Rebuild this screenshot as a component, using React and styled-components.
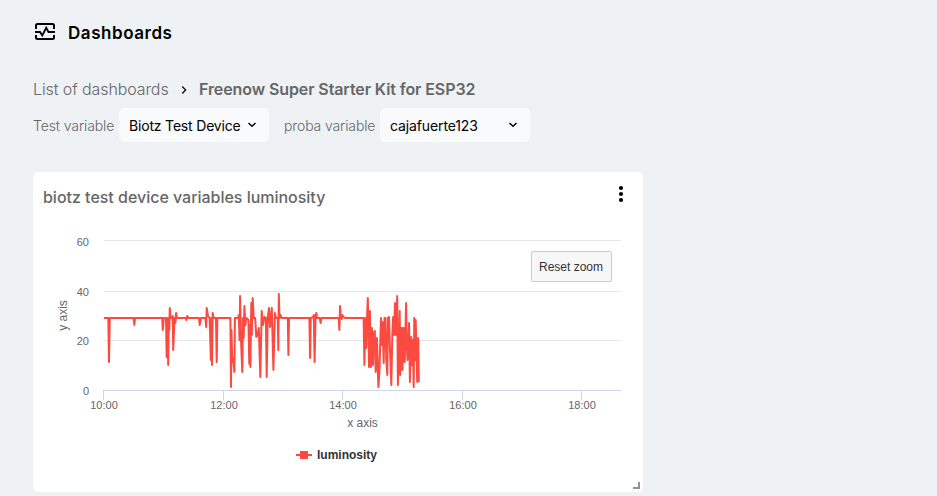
import React from 'react';
import styled, { createGlobalStyle } from 'styled-components';

const GlobalStyle = createGlobalStyle`
  *, *::before, *::after { box-sizing: border-box; }
  body {
    margin: 0;
    background: #eef2f5;
    font-family: Inter, sans-serif;
    color: #000;
    overflow: hidden;
  }
`;

const Page = styled.main`
  display: flex;
  flex-direction: column;
  height: 496px;
  padding: 20px 33px 0;
`;

const PageHeader = styled.header`
  display: flex;
  align-items: center;
  gap: 11px;
  height: 24px;
`;

const PageTitle = styled.h1`
  margin: 2px 0 0;
  font-size: 17px;
  font-weight: 600;
  line-height: 24px;
  letter-spacing: 0.55px;
  white-space: nowrap;
`;

const Breadcrumbs = styled.nav`
  display: flex;
  align-items: center;
  height: 24px;
  margin-top: 33px;
  font-size: 16px;
  line-height: 24px;
  color: #666;
  white-space: nowrap;
`;

const Crumb = styled.span`
  width: ${({ $width }) => $width}px;
  font-weight: ${({ $current }) => ($current ? 600 : 300)};
  letter-spacing: ${({ $spacing }) => $spacing}px;
`;

const CrumbArrow = styled.svg`
  margin: 1px 11px 0 11px;
`;

const Filters = styled.div`
  display: flex;
  align-items: center;
  height: 34px;
  margin-top: 7px;
`;

const FilterLabel = styled.label`
  width: ${({ $width }) => $width}px;
  font-size: 14px;
  font-weight: 300;
  letter-spacing: ${({ $spacing }) => $spacing}px;
  color: #666;
  white-space: nowrap;
`;

const Select = styled.button`
  display: flex;
  align-items: center;
  justify-content: space-between;
  width: 150px;
  height: 34px;
  margin-right: 15px;
  padding: 0 12px 0 10px;
  border: 0;
  border-radius: 5px;
  background: #f9fafc;
  color: #000;
  font: 400 14px Inter, sans-serif;
  letter-spacing: ${({ $spacing }) => $spacing}px;
  white-space: nowrap;
`;

const Card = styled.section`
  position: relative;
  width: 610px;
  height: 320px;
  margin-top: 30px;
  border-radius: 5px;
  background: #fff;
`;

const CardHeader = styled.div`
  display: flex;
  align-items: center;
  justify-content: space-between;
  height: 50px;
  padding: 0 17px 0 10px;
`;

const CardTitle = styled.h2`
  margin: 0;
  font-size: 16px;
  font-weight: 500;
  letter-spacing: -0.02px;
  color: #666;
  white-space: nowrap;
`;

const MenuIcon = styled.svg`
  margin-top: -6px;
`;

const Chart = styled.svg`
  display: block;
  font-family: "Liberation Sans", Arial, sans-serif;
`;

const ResetButton = styled.button`
  position: absolute;
  top: 79px;
  left: 498px;
  width: 81px;
  height: 31px;
  padding: 0 1px 0 0;
  border: 1px solid #ccc;
  border-radius: 2px;
  background: #f7f7f7;
  color: #333;
  font: 12px "Liberation Sans", Arial, sans-serif;
`;

const ResizeHandle = styled.span`
  position: absolute;
  right: 3px;
  bottom: 3px;
  width: 7px;
  height: 7px;
  border: solid #909090;
  border-width: 0 2px 2px 0;
`;

const BASE = 318;

const samples = [
  [104, BASE], [108.3, BASE], [109, 362], [109.8, BASE],
  [133.6, BASE], [134.3, 325], [135.1, BASE],
  [162.2, BASE], [162.8, 330], [163.8, BASE],
  [166, BASE], [166.7, 357], [167.3, BASE], [168.2, 365], [168.8, BASE], [169.3, 330], [169.8, 308], [170.6, 318],
  [172, BASE], [172.7, 316], [173.2, 350], [174.6, BASE], [175.4, 323], [176.1, 313], [177, BASE],
  [185.7, BASE], [186.3, 320], [187.2, 316], [188.3, BASE],
  [199, BASE], [199.7, 325], [201, BASE],
  [205.5, BASE], [206.2, 327], [206.7, 308], [208, 316], [209.6, BASE],
  [210.9, 360], [211.3, BASE], [212, 365], [212.7, 313], [213.5, BASE],
  [216, BASE], [216.7, 362], [217.4, BASE],
  [230.4, BASE], [231, 387], [231.5, 330], [232.2, 362], [233, 358], [234.4, 372], [234.9, BASE],
  [238, BASE], [238.8, 315], [239.5, 340], [240.1, 296], [241, 340], [242.3, 372], [243, 318], [243.7, 338], [244.4, 306], [245.4, 325], [246.3, BASE],
  [248.4, 320], [249.3, 364], [249.9, 325], [250.4, 367], [251.3, 303], [251.8, 335], [252.7, 298], [253.7, BASE],
  [255.2, BASE], [256.3, 337], [257.7, 335], [258.8, 328], [260.3, 377], [261.7, 311], [263, 325], [264.5, 317],
  [265.9, BASE], [266.7, 377], [267.7, BASE], [269, 308], [270, 327], [271.8, 308], [273.4, 370], [274.9, 313],
  [276, BASE], [277.8, BASE], [278.3, 350], [278.8, 294], [279.5, BASE], [280.5, 315], [281.5, BASE],
  [287.8, BASE], [288.4, 355], [289, BASE],
  [309.4, BASE], [310.1, 358], [310.8, BASE],
  [313.2, 317], [313.8, 315], [314.6, 362], [315.5, BASE], [316.2, 313], [317, BASE],
  [319.7, BASE], [320.6, 323], [321.5, BASE],
  [338.7, BASE], [339.4, 330], [340, 306], [340.7, 315], [341.8, 319], [342.2, 315], [344.6, BASE],
  [363.6, BASE], [364.4, 365], [365.3, BASE], [366.3, 348], [367.1, 315], [367.8, 298], [368.5, 330], [369, 367], [369.9, 311], [370.9, 367], [371.9, 328], [373, 365], [373.7, 333], [374.8, 331], [375.7, 372], [376.9, 338], [378.4, 387],
  [379.4, 372], [381, BASE], [382, 345], [382.5, 322], [383.7, 363], [384.5, BASE], [385.5, BASE], [386.3, 360], [387.3, 375], [388, BASE], [389, 317], [390, 350], [391.3, 385], [392.3, 335], [393.1, 317], [394, 335], [395, 303], [396, 335], [397.2, 296], [397.9, 385], [399.2, 335], [399.7, 311], [400.2, 375], [401.3, 328], [402, 328], [402.4, 370], [403.8, 328], [404.7, 362], [406.1, 303], [406.8, 345], [407.5, 360], [409.1, 323], [409.9, 382], [411.2, 337], [412.1, 365],
  [412.8, 340], [413.7, 387], [414.3, BASE], [415.2, 360], [415.7, 320], [417.2, 382], [418.2, 338], [418.8, 382],
];

const line = samples.map(([x, y]) => `${x},${y}`).join(' ');
const yTicks = [[60, 240.5], [40, 291.5], [20, 340.5], [0, 390.5]];
const xTicks = [['10:00', 103.5], ['12:00', 223.5], ['14:00', 342.5], ['16:00', 462.5], ['18:00', 581.5]];

function Chevron() {
  return (
    <svg width="10" height="10" viewBox="0 0 10 10" fill="none" stroke="#000" strokeWidth="1.4">
      <path d="M1.5 3 5 6.3 8.5 3" />
    </svg>
  );
}

function LuminosityChart() {
  return (
    <Chart width="610" height="260" viewBox="33 222 610 260">
      {yTicks.map(([label, y]) => (
        <g key={label}>
          <path d={`M104 ${y}H621`} stroke={label === 0 ? '#ccd6eb' : '#e6e6e6'} />
          <text x="89" y={label === 0 ? 395 : label === 20 ? 345 : label === 40 ? 296 : 246} textAnchor="end" fontSize="11" fill="#666">{label}</text>
        </g>
      ))}
      {xTicks.map(([label, x]) => (
        <g key={label}>
          <path d={`M${x} 390V400`} stroke="#ccd6eb" />
          <text x={x + 0.5} y="409" textAnchor="middle" fontSize="11" fill="#666">{label}</text>
        </g>
      ))}
      <text transform="translate(67 315.5) rotate(-90)" textAnchor="middle" fontSize="12" fill="#666">y axis</text>
      <text x="362.5" y="427" textAnchor="middle" fontSize="12" fill="#666">x axis</text>
      <polyline points={line} fill="none" stroke="#fc4a40" strokeWidth="2" strokeLinejoin="round" />
      <path d="M296 455H312" stroke="#fc4a40" strokeWidth="2" />
      <rect x="300" y="451" width="8" height="8" fill="#fc4a40" />
      <text x="317" y="459" fontSize="12" fontWeight="700" fill="#333">luminosity</text>
    </Chart>
  );
}

export default function App() {
  return (
    <>
      <GlobalStyle />
      <Page>
        <PageHeader>
          <svg width="24" height="24" viewBox="0 0 24 24" fill="none" stroke="#000" strokeWidth="2">
            <path d="M3 9V5.5Q3 4 4.5 4H19.5Q21 4 21 5.5V9M3 15V17.5Q3 19 4.5 19H19.5Q21 19 21 17.5V15" />
            <path d="M2 12H7L9.3 15.5L13.2 7.8L15.5 12H22" strokeWidth="1.8" />
          </svg>
          <PageTitle>Dashboards</PageTitle>
        </PageHeader>
        <Breadcrumbs>
          <Crumb $width={136} $spacing={-0.1}>List of dashboards</Crumb>
          <CrumbArrow width="8" height="10" viewBox="0 0 8 10" fill="none" stroke="#111" strokeWidth="1.4">
            <path d="M2.3 1.5 5.6 5 2.3 8.5" />
          </CrumbArrow>
          <Crumb $current $width={277} $spacing={-0.1}>Freenow Super Starter Kit for ESP32</Crumb>
        </Breadcrumbs>
        <Filters>
          <FilterLabel $width={86} $spacing={-0.1}>Test variable</FilterLabel>
          <Select $spacing={-0.18}>Biotz Test Device<Chevron /></Select>
          <FilterLabel $width={96} $spacing={-0.12}>proba variable</FilterLabel>
          <Select $spacing={-0.12}>cajafuerte123<Chevron /></Select>
        </Filters>
        <Card>
          <CardHeader>
            <CardTitle>biotz test device variables luminosity</CardTitle>
            <MenuIcon width="10" height="18" viewBox="0 0 10 18">
              <circle cx="5" cy="3" r="2.1" />
              <circle cx="5" cy="9" r="2.1" />
              <circle cx="5" cy="15" r="2.1" />
            </MenuIcon>
          </CardHeader>
          <LuminosityChart />
          <ResetButton>Reset zoom</ResetButton>
          <ResizeHandle />
        </Card>
      </Page>
    </>
  );
}
